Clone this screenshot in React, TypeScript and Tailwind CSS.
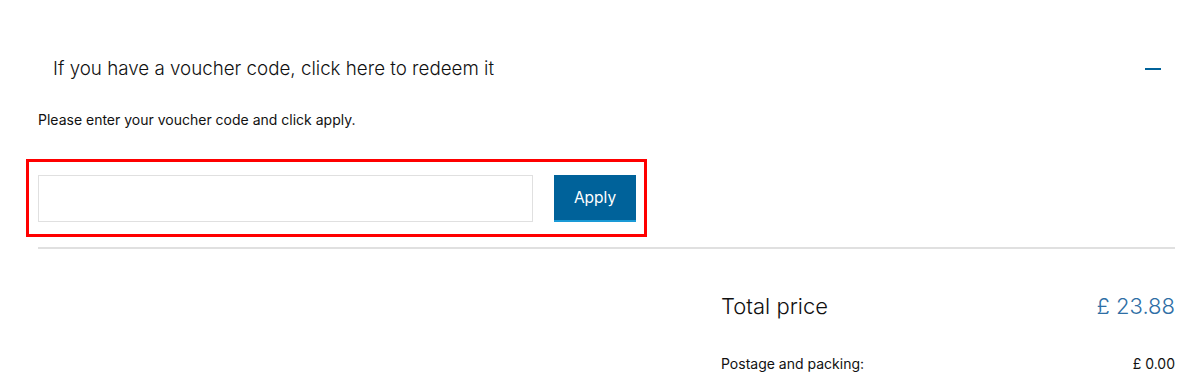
import React from "react";

const font = { fontFamily: "Inter, 'Noto Sans', sans-serif" };

function App() {
  return (
    <div className="w-[1199px] h-[388px] bg-white overflow-hidden text-[#000]" style={font}>
      <div className="pl-[38px] pr-[24px] pt-[51px]">
        <div className="flex items-center justify-between pl-[15px] pr-[14px] h-[36px]">
          <span className="text-[18.75px] font-light text-[#111]">
            If you have a voucher code, click here to redeem it
          </span>
          <span className="block w-[16px] h-[2px] bg-[#00629a]" />
        </div>
        <p className="mt-[24px] text-[14px] leading-[18px] text-[#111]">
          Please enter your voucher code and click apply.
        </p>
        <div className="mt-[30px] -ml-[12px] w-[621px] h-[78px] border-[3px] border-[#ff0000] pl-[9px] pt-[13px]">
          <div className="flex gap-[21px]">
            <input
              type="text"
              className="w-[495px] h-[47px] border border-[#e0e0e0] outline-none px-3"
            />
            <button className="w-[82px] h-[47px] bg-[#00629a] border-b-[2px] border-[#1a9ad6] text-white text-[15.5px]">
              Apply
            </button>
          </div>
        </div>
        <div className="mt-[10px] h-[2px] bg-[#e0e0e0]" />
        <div className="flex justify-end">
          <div className="w-[454px]">
            <div className="flex items-center justify-between mt-[41px]">
              <span className="text-[22px] font-light text-[#111]">Total price</span>
              <span className="text-[22px] font-light text-[#2e6ea5]">£ 23.88</span>
            </div>
            <div className="flex items-center justify-between mt-[30px] text-[14px] text-[#111]">
              <span>Postage and packing:</span>
              <span>£ 0.00</span>
            </div>
          </div>
        </div>
      </div>
    </div>
  );
}

export default App;
